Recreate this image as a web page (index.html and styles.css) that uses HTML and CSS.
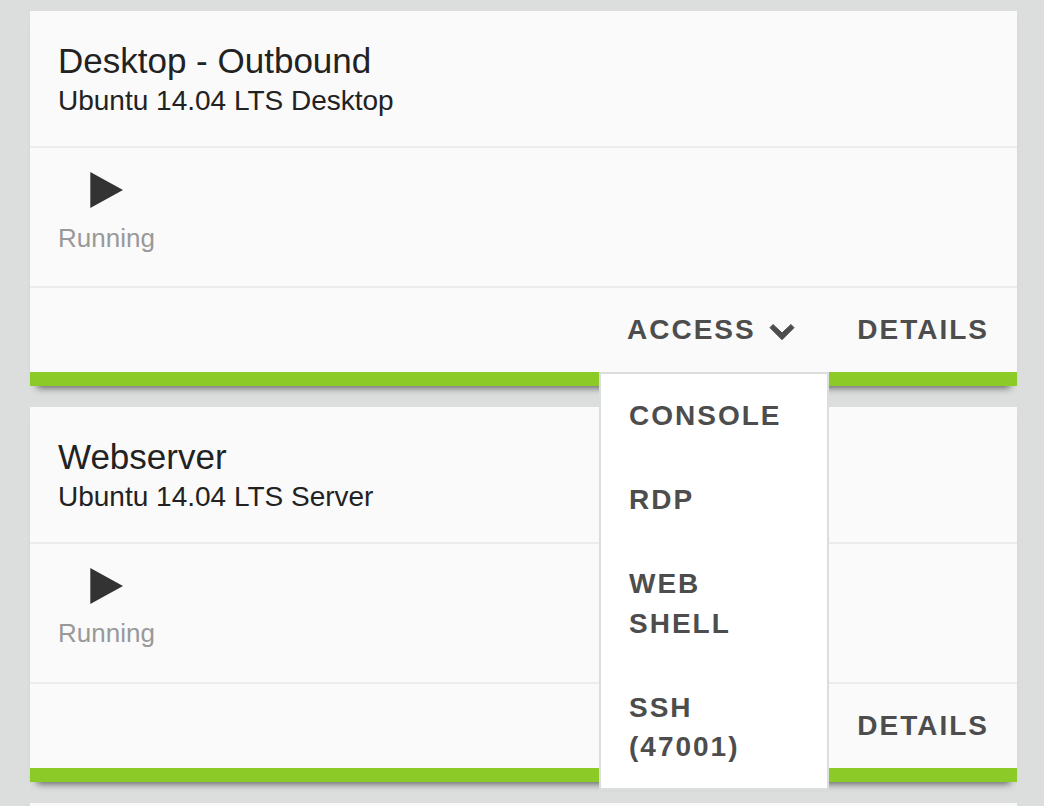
FILE: index.html
```html
<!DOCTYPE html>
<html lang="en">
<head>
<meta charset="utf-8">
<title>Machines</title>
<link rel="stylesheet" href="styles.css">
</head>
<body>
<main class="machines">
  <section class="card">
    <header class="card-header">
      <h2 class="card-title">Desktop - Outbound</h2>
      <p class="card-subtitle">Ubuntu 14.04 LTS Desktop</p>
    </header>
    <div class="card-status">
      <svg class="play" viewBox="0 0 34 38"><path d="M0.300 1V37L33 19Z"/></svg>
      <span class="status-text">Running</span>
    </div>
    <footer class="card-actions">
      <div class="dropdown">
        <a class="action">Access<svg class="chevron" viewBox="0 0 26 18"><path d="M1 4.700L4 1.500L13 9.900L22 1.500L25 4.700L13 16.700Z"/></svg></a>
        <div class="menu">
          <a class="menu-item">Console</a>
          <a class="menu-item">RDP</a>
          <a class="menu-item">Web Shell</a>
          <a class="menu-item">SSH (47001)</a>
        </div>
      </div>
      <a class="action">Details</a>
    </footer>
  </section>
  <section class="card">
    <header class="card-header">
      <h2 class="card-title">Webserver</h2>
      <p class="card-subtitle">Ubuntu 14.04 LTS Server</p>
    </header>
    <div class="card-status">
      <svg class="play" viewBox="0 0 34 38"><path d="M0.300 1V37L33 19Z"/></svg>
      <span class="status-text">Running</span>
    </div>
    <footer class="card-actions">
      <a class="action">Details</a>
    </footer>
  </section>
  <section class="card card-next"></section>
</main>
</body>
</html>
```
FILE: styles.css
```css
* { box-sizing: border-box; }
body {
  margin: 0;
  height: 806px;
  overflow: hidden;
  background: #dcdedd;
  color: #222;
  font-family: "Liberation Sans", Arial, sans-serif;
}
.machines {
  display: flex;
  flex-direction: column;
  gap: 21px;
  height: 806px;
  padding: 11px 27px 0 30px;
}
.card {
  flex: none;
  background: #fafafa;
  border-bottom: 14px solid #8bca27;
  box-shadow: 0 9px 7px -7px rgba(0, 0, 0, .55), 0 1px 5px rgba(0, 0, 0, .02);
}
.card-next {
  flex: 1 1 0;
  border-bottom: 0;
}
.card-header {
  height: 137px;
  padding: 28px 28px 0;
  border-bottom: 2px solid #ececec;
}
.card-title {
  margin: 0;
  font-size: 35px;
  font-weight: 400;
  line-height: 44px;
}
.card-subtitle {
  margin: 0;
  font-size: 28px;
  line-height: 35px;
}
.card-status {
  display: flex;
  flex-direction: column;
  align-items: flex-start;
  height: 140px;
  padding: 23px 28px 0;
  border-bottom: 2px solid #ececec;
}
.play {
  width: 34px;
  height: 38px;
  margin-left: 32px;
  fill: #333;
}
.status-text {
  margin-top: 14px;
  color: #999;
  font-size: 26px;
  line-height: 30px;
}
.card + .card .status-text { margin-top: 13px; }
.card-actions {
  display: flex;
  justify-content: flex-end;
  height: 84px;
}
.dropdown { position: relative; }
.action {
  display: flex;
  align-items: center;
  height: 84px;
  padding: 0 28px;
}
.action, .menu-item {
  color: #4d4d4d;
  font-size: 28px;
  font-weight: 700;
  line-height: 39.2px;
  letter-spacing: 2px;
  text-transform: uppercase;
}
.chevron {
  width: 26px;
  height: 18px;
  margin: 4px 6.500px 0 13.100px;
  fill: #4d4d4d;
  stroke: #4d4d4d;
  stroke-width: 1;
  stroke-linejoin: round;
}
.menu {
  position: absolute;
  z-index: 2;
  top: 84px;
  left: 0;
  width: 230px;
  background: #fff;
  border: 2px solid #dcdedd;
}
.menu-item {
  display: block;
  padding: 22.4px 28px;
}
```
